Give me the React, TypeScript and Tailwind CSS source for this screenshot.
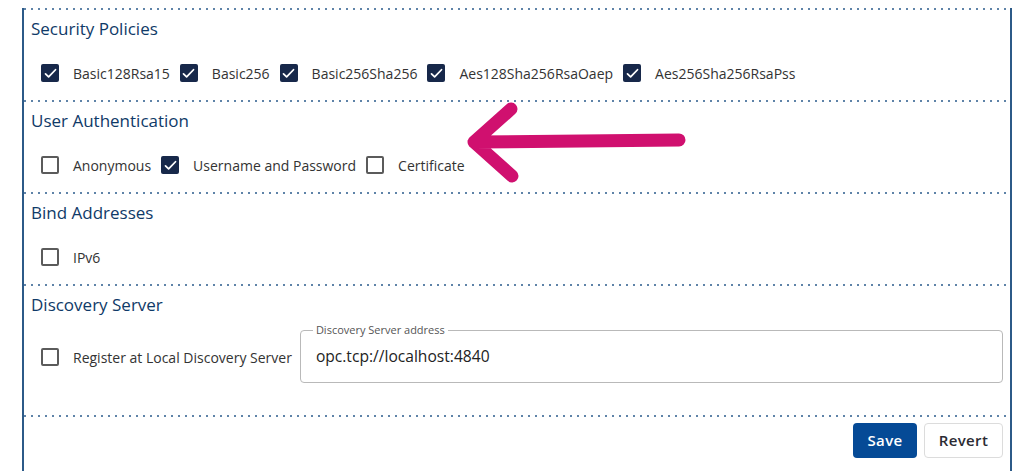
import React from "react";

const font = { fontFamily: '"Open Sans", "Noto Sans", Arial, sans-serif' };

function Dots() {
  return (
    <div className="h-[2px] w-full bg-[linear-gradient(to_right,#5f83a8_2px,transparent_2px)] bg-[length:7px_2px] bg-repeat-x" />
  );
}

function Box({ checked }: { checked: boolean }) {
  if (checked) {
    return (
      <span className="flex h-[18px] w-[18px] shrink-0 items-center justify-center rounded-[2px] bg-[#17284a]">
        <svg width="15" height="15" viewBox="0 0 24 24" fill="none" stroke="white" strokeWidth="2.8" strokeLinecap="round" strokeLinejoin="round">
          <path d="M4 12.5l5 5L20 6" />
        </svg>
      </span>
    );
  }
  return <span className="h-[18px] w-[18px] shrink-0 rounded-[2px] border-2 border-[#5b5b5b] bg-white" />;
}

function Item({ label, checked }: { label: string; checked: boolean }) {
  return (
    <label className="flex items-center gap-[14px]">
      <Box checked={checked} />
      <span className="text-[14px] text-[#333]">{label}</span>
    </label>
  );
}

function Section({ title, items }: { title: string; items: [string, boolean][] }) {
  return (
    <section>
      <Dots />
      <div className="h-[90px]">
        <h2 className="pl-[7px] pt-[7px] text-[17px] leading-[24px] text-[#0f3a68]">{title}</h2>
        <div className="mt-[20px] flex h-[24px] items-center gap-[10px] pl-[17px]">
          {items.map(([l, c]) => (
            <Item key={l} label={l} checked={c} />
          ))}
        </div>
      </div>
    </section>
  );
}

export default function App() {
  return (
    <div className="relative h-[471px] w-[1034px] overflow-hidden bg-white pt-2" style={font}>
      <div className="ml-[22px] h-[463px] w-[990px] border-x-2 border-[#2c5a88]">
        <Section
          title="Security Policies"
          items={[
            ["Basic128Rsa15", true],
            ["Basic256", true],
            ["Basic256Sha256", true],
            ["Aes128Sha256RsaOaep", true],
            ["Aes256Sha256RsaPss", true],
          ]}
        />
        <Section
          title="User Authentication"
          items={[
            ["Anonymous", false],
            ["Username and Password", true],
            ["Certificate", false],
          ]}
        />
        <Section title="Bind Addresses" items={[["IPv6", false]]} />
        <section>
          <Dots />
          <div className="h-[129px]">
            <h2 className="pl-[7px] pt-[7px] text-[17px] leading-[24px] text-[#0f3a68]">Discovery Server</h2>
            <div className="mt-[14px] flex items-center pl-[17px] pr-[7px]">
              <Item label="Register at Local Discovery Server" checked={false} />
              <fieldset className="-mt-[7px] ml-[8px] h-[59px] flex-1 rounded-[4px] border border-[#b9b9b9] px-[12px]">
                <legend className="px-[3px] text-[11px] leading-[12px] text-[#555]">Discovery Server address</legend>
                <div className="pl-[3px] pt-[8px] text-[15.6px] leading-[24px] text-[#222]">opc.tcp://localhost:4840</div>
              </fieldset>
            </div>
          </div>
        </section>
        <Dots />
        <div className="flex justify-end gap-[7px] pr-[7px] pt-[6px]">
          <button className="h-[35px] w-[64px] rounded-[4px] bg-[#054a96] text-[15px] font-semibold tracking-wide text-white">
            Save
          </button>
          <button className="h-[35px] w-[79px] rounded-[4px] border border-[#dcdcdc] bg-white text-[15px] font-semibold tracking-wide text-[#2b2b33]">
            Revert
          </button>
        </div>
      </div>
      <svg className="absolute left-0 top-0" width="1034" height="471" viewBox="0 0 1034 471" fill="none">
        <path
          d="M679 140 L474 142 M511 109 L474 142 L512 176"
          stroke="#d0106f"
          strokeWidth="13"
          strokeLinecap="round"
          strokeLinejoin="round"
        />
      </svg>
    </div>
  );
}
